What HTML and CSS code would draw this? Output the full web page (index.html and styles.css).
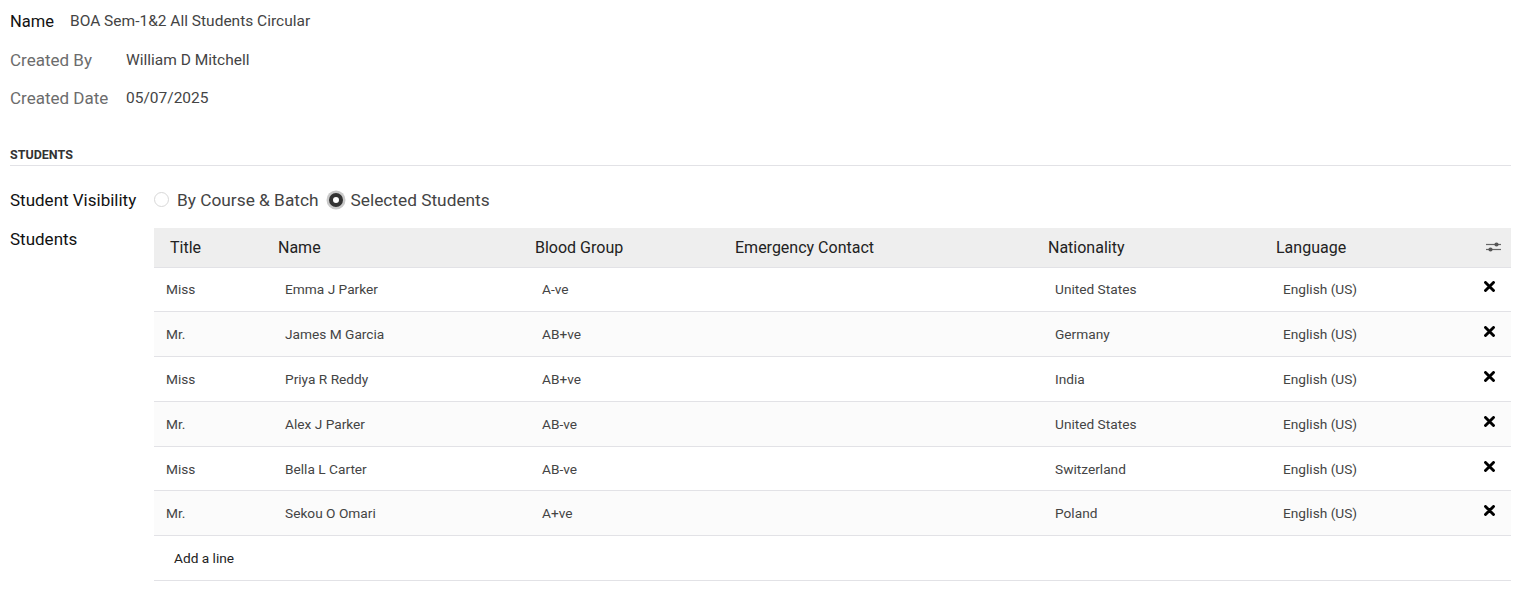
FILE: index.html
```html
<!DOCTYPE html>
<html lang="en">
<head>
    <meta charset="UTF-8">
    <title>BOA Sem-1&amp;2 All Students Circular</title>
    <link rel="stylesheet" href="styles.css">
</head>
<body>
    <div class="form">
        <div class="field field-name">
            <span class="label strong">Name</span>
            <span class="value">BOA Sem-1&amp;2 All Students Circular</span>
        </div>
        <div class="field">
            <span class="label muted">Created By</span>
            <span class="value">William D Mitchell</span>
        </div>
        <div class="field">
            <span class="label muted">Created Date</span>
            <span class="value">05/07/2025</span>
        </div>

        <div class="separator">STUDENTS</div>

        <div class="field field-radio">
            <span class="label strong">Student Visibility</span>
            <div class="radios">
                <label class="radio"><span class="dot"></span>By Course &amp; Batch</label>
                <label class="radio checked"><span class="dot"></span>Selected Students</label>
            </div>
        </div>

        <div class="field field-list">
            <span class="label strong">Students</span>
            <table class="list">
                <colgroup>
                    <col style="width:116px">
                    <col style="width:257px">
                    <col style="width:200px">
                    <col style="width:313px">
                    <col style="width:228px">
                    <col style="width:200px">
                    <col>
                </colgroup>
                <thead>
                    <tr>
                        <th class="first">Title</th>
                        <th>Name</th>
                        <th>Blood Group</th>
                        <th>Emergency Contact</th>
                        <th>Nationality</th>
                        <th>Language</th>
                        <th class="opt">
                            <svg width="15" height="12" viewBox="0 0 15 12">
                                <line x1="0" y1="3.5" x2="15" y2="3.5" stroke="#666" stroke-width="1.2"/>
                                <circle cx="10.5" cy="3.5" r="2.1" fill="#555"/>
                                <line x1="0" y1="8.5" x2="15" y2="8.5" stroke="#666" stroke-width="1.2"/>
                                <circle cx="4.5" cy="8.5" r="2.1" fill="#555"/>
                            </svg>
                        </th>
                    </tr>
                </thead>
                <tbody id="rows"></tbody>
                <tfoot>
                    <tr>
                        <td colspan="7" class="add">Add a line</td>
                    </tr>
                </tfoot>
            </table>
        </div>
    </div>

    <script>
        const students = [
            ['Miss', 'Emma J Parker', 'A-ve', 'United States'],
            ['Mr.', 'James M Garcia', 'AB+ve', 'Germany'],
            ['Miss', 'Priya R Reddy', 'AB+ve', 'India'],
            ['Mr.', 'Alex J Parker', 'AB-ve', 'United States'],
            ['Miss', 'Bella L Carter', 'AB-ve', 'Switzerland'],
            ['Mr.', 'Sekou O Omari', 'A+ve', 'Poland']
        ];

        const cross = '<svg width="11" height="11" viewBox="0 0 11 11">' +
            '<path d="M1.5 1.5 L9.5 9.5 M9.5 1.5 L1.5 9.5" stroke="#000" stroke-width="2.9" stroke-linecap="round"/></svg>';

        const body = document.getElementById('rows');
        students.forEach(s => {
            const tr = document.createElement('tr');
            tr.innerHTML =
                '<td class="first">' + s[0] + '</td>' +
                '<td>' + s[1] + '</td>' +
                '<td>' + s[2] + '</td>' +
                '<td></td>' +
                '<td>' + s[3] + '</td>' +
                '<td>English (US)</td>' +
                '<td class="del">' + cross + '</td>';
            body.appendChild(tr);
        });
    </script>
</body>
</html>
```

FILE: styles.css
```css
:root {
    --text-color: #222;
    --value-color: #444;
    --muted-color: #6c6c6c;
    --border-color: #e2e2e6;
    --head-bg: #eeeeee;
    --stripe-bg: #fbfbfb;
}

body {
    margin: 0;
    font-family: Roboto, "Noto Sans", sans-serif;
    color: var(--text-color);
    background: #fff;
}

.form {
    padding: 2px 8px 0 10px;
}

.field {
    display: flex;
    align-items: center;
    height: 38.5px;
    font-size: 17px;
}

.label {
    width: 116px;
    flex-shrink: 0;
}

.field-name .label {
    width: 60px;
    font-size: 16.5px;
}

.label.strong {
    color: #111;
}

.label.muted {
    color: var(--muted-color);
}

.value {
    font-size: 15.5px;
    color: var(--value-color);
}

.separator {
    margin-top: 30px;
    height: 14px;
    line-height: 14px;
    padding-bottom: 3px;
    border-bottom: 1px solid var(--border-color);
    font-size: 12.5px;
    font-weight: 700;
    color: #333;
    margin-bottom: 16px;
}

.field-radio {
    height: 36px;
    margin-bottom: 10px;
}

.field-radio .label {
    width: 144px;
}

.radios {
    display: flex;
    align-items: center;
    gap: 10px;
    color: #444;
    font-size: 17.3px;
}

.radio {
    display: flex;
    align-items: center;
    gap: 8px;
}

.dot {
    width: 15px;
    height: 15px;
    border: 1px solid #d8d8d8;
    border-radius: 50%;
    box-sizing: border-box;
}

.radio.checked {
    gap: 8px;
}

.radio.checked .dot {
    width: 14px;
    height: 14px;
    border: 4px solid #333;
    background: #fff;
    box-shadow: 0 0 0 2.5px #c9c9c9;
}

.field-list {
    align-items: flex-start;
    height: auto;
}

.field-list .label {
    width: 144px;
    line-height: 20px;
    padding-top: 1px;
}

.list {
    flex: 1;
    border-collapse: collapse;
    table-layout: fixed;
    font-size: 13.7px;
    color: var(--value-color);
}

.list th {
    background: var(--head-bg);
    height: 39px;
    padding: 0 0 0 8px;
    text-align: left;
    font-weight: 400;
    font-size: 16px;
    color: var(--text-color);
    border-bottom: 1px solid var(--border-color);
}

.list th.first {
    padding-left: 16px;
}

.list th.opt {
    text-align: right;
    padding-right: 10px;
}

.list td {
    height: 43.8px;
    padding: 0 0 0 15px;
    border-bottom: 1px solid var(--border-color);
}

.list td.first {
    padding-left: 12px;
}

.list tbody tr:nth-child(even) td {
    background: var(--stripe-bg);
}

.list td.del {
    text-align: right;
    padding-right: 16px;
    vertical-align: middle;
}

.list td.del svg {
    position: relative;
    top: -2px;
}

.list td.add {
    padding-left: 20px;
    color: var(--text-color);
}
```
